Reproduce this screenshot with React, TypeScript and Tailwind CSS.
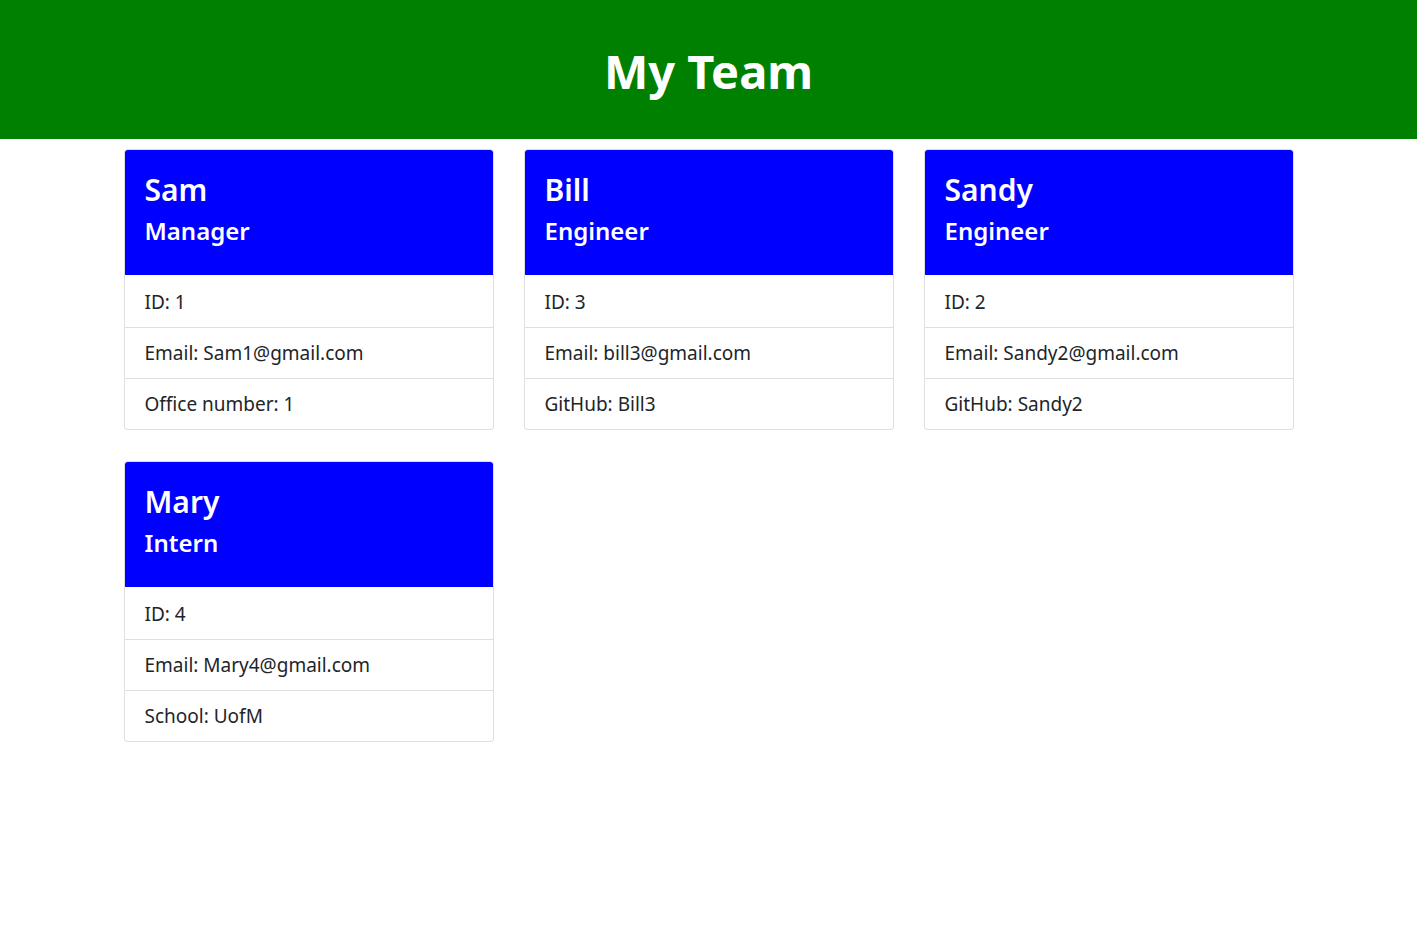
import React from "react";

type Member = { name: string; role: string; lines: string[] };

const members: Member[] = [
  { name: "Sam", role: "Manager", lines: ["ID: 1", "Email: Sam1@gmail.com", "Office number: 1"] },
  { name: "Bill", role: "Engineer", lines: ["ID: 3", "Email: bill3@gmail.com", "GitHub: Bill3"] },
  { name: "Sandy", role: "Engineer", lines: ["ID: 2", "Email: Sandy2@gmail.com", "GitHub: Sandy2"] },
  { name: "Mary", role: "Intern", lines: ["ID: 4", "Email: Mary4@gmail.com", "School: UofM"] },
];

function Card({ m }: { m: Member }) {
  return (
    <div className="w-[370px] rounded-[4px] border border-[rgba(0,0,0,0.125)] bg-white overflow-hidden">
      <div className="h-[125px] bg-[#0000ff] px-[20px] pt-[21px] text-white">
        <div className="text-[30px] leading-[38px] font-semibold mb-[7px]">{m.name}</div>
        <div className="text-[24px] leading-[29px] font-semibold">{m.role}</div>
      </div>
      <div>
        {m.lines.map((l, i) => (
          <div
            key={i}
            className={
              "px-[20px] text-[19px] leading-[26px] text-[#212529] " +
              (i > 0 ? "py-[12px] border-t border-[rgba(0,0,0,0.125)]" : "pt-[14px] pb-[12px]")
            }
          >
            {l}
          </div>
        ))}
      </div>
    </div>
  );
}

export default function App() {
  return (
    <div className="min-h-[931px] bg-white" style={{ fontFamily: '"Noto Sans", "Open Sans", sans-serif' }}>
      <div className="h-[139px] bg-[#008000] flex items-center justify-center pt-[3px]">
        <h1 className="text-white text-[47px] font-bold leading-none">My Team</h1>
      </div>
      <div className="w-[1170px] mx-auto pt-[10px] grid grid-cols-3 gap-x-[30px] gap-y-[31px]">
        {members.map((m) => (
          <Card key={m.name} m={m} />
        ))}
      </div>
    </div>
  );
}
